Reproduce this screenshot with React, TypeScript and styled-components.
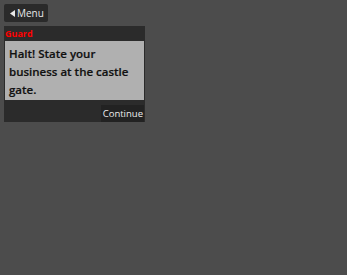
import React from 'react';
import styled, { createGlobalStyle } from 'styled-components';

const GlobalStyle = createGlobalStyle`
  html, body {
    margin: 0;
    padding: 0;
    background: #4c4c4c;
    font-family: "Open Sans", "DejaVu Sans", sans-serif;
  }
`;

const Screen = styled.div`
  width: 347px;
  height: 275px;
  padding: 4px;
  box-sizing: border-box;
  display: flex;
  flex-direction: column;
  gap: 4px;
`;

const MenuButton = styled.button`
  align-self: flex-start;
  display: flex;
  align-items: center;
  gap: 2px;
  height: 18px;
  padding: 0 4px 0 6px;
  border: none;
  border-radius: 2px;
  background: #2a2a2a;
  color: #e8e8e8;
  font-family: inherit;
  font-size: 10px;
  cursor: pointer;
`;

const Dialog = styled.div`
  width: 141px;
  background: #2b2b2b;
  display: flex;
  flex-direction: column;
`;

const Speaker = styled.div`
  color: #ff0000;
  font-size: 9px;
  font-weight: 700;
  line-height: 15px;
  padding: 0 1px;
`;

const Body = styled.div`
  margin: 0 1px;
  background: #b0b0b0;
  color: #111111;
  font-size: 11.5px;
  font-weight: 600;
  line-height: 18px;
  padding: 4px 4px 1px 4px;
  -webkit-text-stroke: 0.2px #111111;
`;

const Footer = styled.div`
  display: flex;
  justify-content: flex-end;
  padding: 5px 1px 0;
`;

const ContinueButton = styled.button`
  border: none;
  background: #222222;
  color: #ececec;
  font-family: inherit;
  font-size: 9.5px;
  height: 17px;
  padding: 0 1px 0 2px;
  cursor: pointer;
`;

const BackArrow = () => (
  <svg width="5" height="7" viewBox="0 0 5 7" aria-hidden="true">
    <path d="M5 0 L0 3.5 L5 7 Z" fill="#e8e8e8" />
  </svg>
);

export default function App() {
  return (
    <>
      <GlobalStyle />
      <Screen>
        <MenuButton>
          <BackArrow />
          Menu
        </MenuButton>
        <Dialog>
          <Speaker>Guard</Speaker>
          <Body>Halt! State your business at the castle gate.</Body>
          <Footer>
            <ContinueButton>Continue</ContinueButton>
          </Footer>
        </Dialog>
      </Screen>
    </>
  );
}
